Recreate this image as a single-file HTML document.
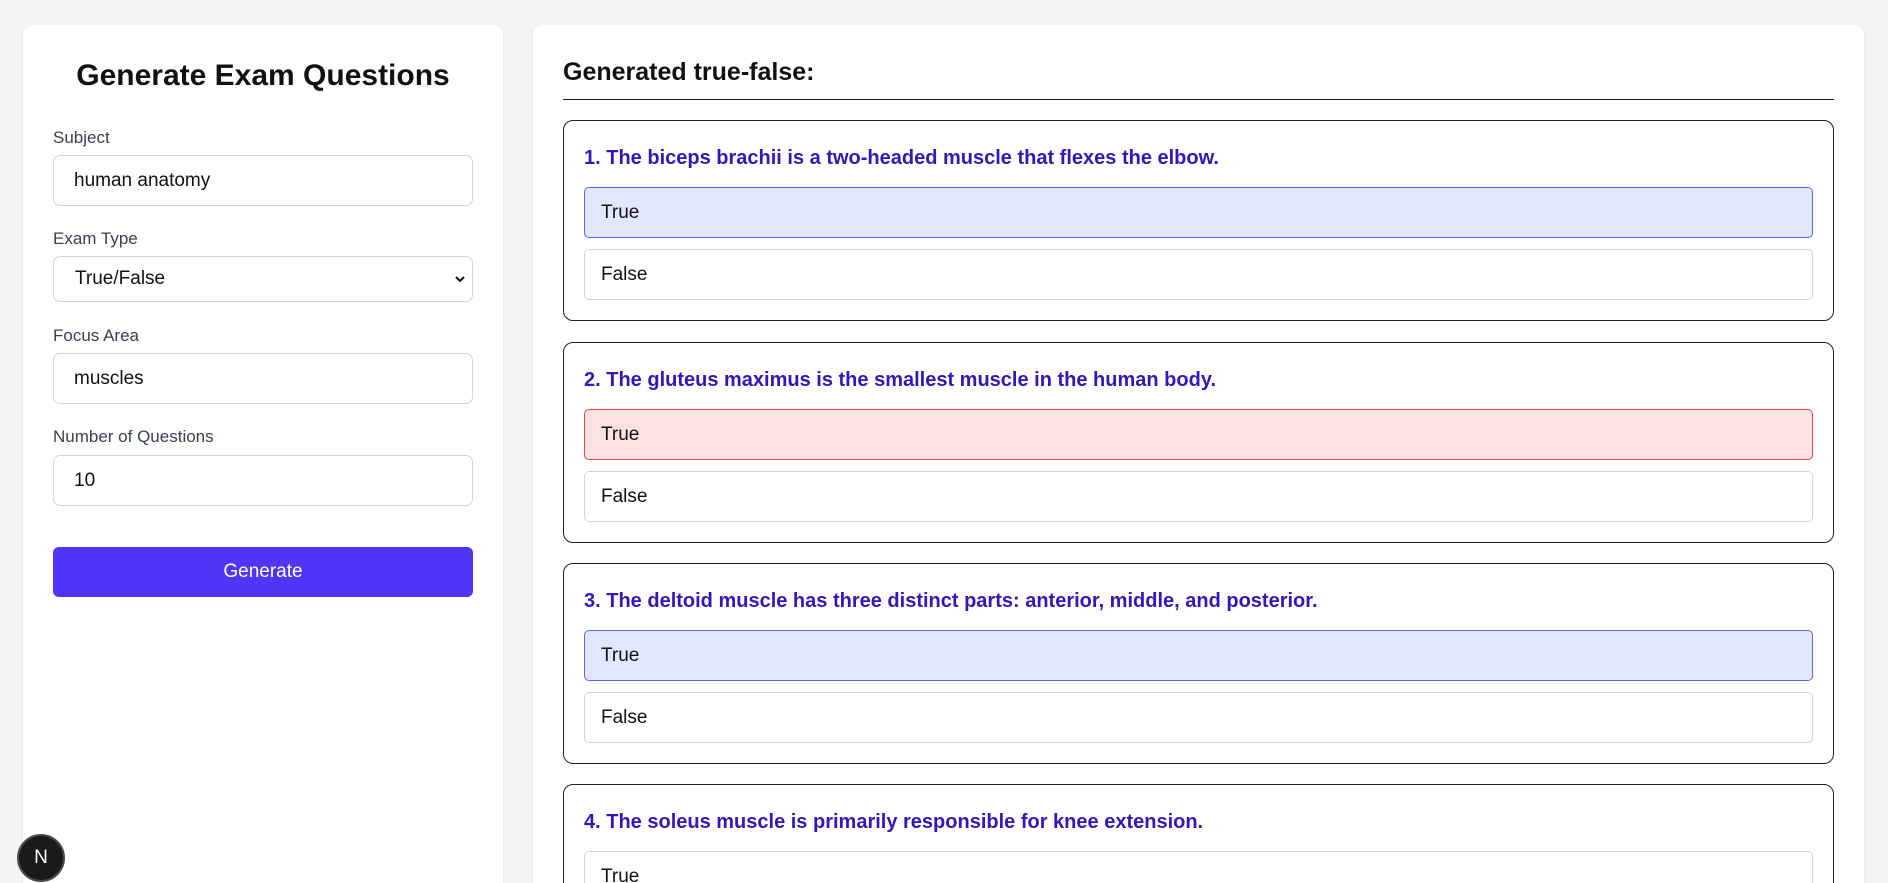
<!DOCTYPE html>
<html><head><meta charset="utf-8"><style>
*{box-sizing:border-box;margin:0;padding:0}
html,body{width:1888px;height:883px;overflow:hidden}
body{background:#f3f4f6;font-family:"Liberation Sans",Arial,sans-serif;position:relative}
.left{position:absolute;left:23px;top:25px;width:480px;height:858px;background:#fff;border-radius:10px 10px 0 0;box-shadow:0 1px 3px rgba(0,0,0,.08)}
.left h1{position:absolute;left:0;right:0;top:34px;text-align:center;font-size:30px;font-weight:bold;color:#111}
.lbl{position:absolute;left:30px;font-size:17px;color:#374151}
.inp{position:absolute;left:30px;width:420px;height:51px;border:1px solid #d1d5db;border-radius:7px;font-size:19px;color:#111;padding-left:20px;line-height:49px}
.btn{position:absolute;left:30px;top:522px;width:420px;height:50px;background:#5036f7;border-radius:6px;color:#fff;font-size:19px;text-align:center;line-height:50px}
.right{position:absolute;left:533px;top:25px;width:1331px;height:858px;background:#fff;border-radius:10px 10px 0 0;box-shadow:0 1px 3px rgba(0,0,0,.08);overflow:hidden}
.right h2{position:absolute;left:30px;top:33px;font-size:25px;font-weight:bold;color:#111}
.hr{position:absolute;left:30px;top:74px;width:1271px;height:1px;background:#222}
.card{position:absolute;left:30px;width:1271px;height:201px;border:1px solid #222;border-radius:10px;padding:20px}
.q{height:34px;line-height:34px;margin-bottom:12px;font-size:20px;font-weight:bold;color:#3118b8}
.opt{height:51px;border:1px solid #d1d5db;border-radius:5px;padding-left:16px;line-height:49px;font-size:19px;color:#111;margin-bottom:11px}
.sel{background:#e0e7ff;border-color:#6366f1}
.wrong{background:#fee2e2;border-color:#ef4444}
.badge{position:absolute;left:17px;top:834px;width:48px;height:48px;border-radius:50%;background:#1a1a1a;border:2px solid #4a4a4a;color:#fff;font-size:19px;text-align:center;line-height:44px}
</style></head><body>
<div class="left">
<h1>Generate Exam Questions</h1>
<div class="lbl" style="top:103px">Subject</div>
<div class="inp" style="top:130px">human anatomy</div>
<div class="lbl" style="top:204px">Exam Type</div>
<div class="inp" style="top:231px;height:46px;line-height:44px;padding-left:21px">True/False<svg style="position:absolute;right:6px;top:17px" width="12" height="10" viewBox="0 0 12 10"><path d="M2 3l4 4 4-4" fill="none" stroke="#111" stroke-width="2"/></svg></div>
<div class="lbl" style="top:301px">Focus Area</div>
<div class="inp" style="top:328px">muscles</div>
<div class="lbl" style="top:402px">Number of Questions</div>
<div class="inp" style="top:430px">10</div>
<div class="btn">Generate</div>
</div>
<div class="right">
<h2>Generated true-false:</h2>
<div class="hr"></div>
<div class="card" style="top:95px"><div class="q">1. The biceps brachii is a two-headed muscle that flexes the elbow.</div><div class="opt sel">True</div><div class="opt">False</div></div>
<div class="card" style="top:317px"><div class="q">2. The gluteus maximus is the smallest muscle in the human body.</div><div class="opt wrong">True</div><div class="opt">False</div></div>
<div class="card" style="top:538px"><div class="q">3. The deltoid muscle has three distinct parts: anterior, middle, and posterior.</div><div class="opt sel">True</div><div class="opt">False</div></div>
<div class="card" style="top:759px"><div class="q">4. The soleus muscle is primarily responsible for knee extension.</div><div class="opt">True</div><div class="opt">False</div></div>
</div>
<div class="badge">N</div>
</body></html>
